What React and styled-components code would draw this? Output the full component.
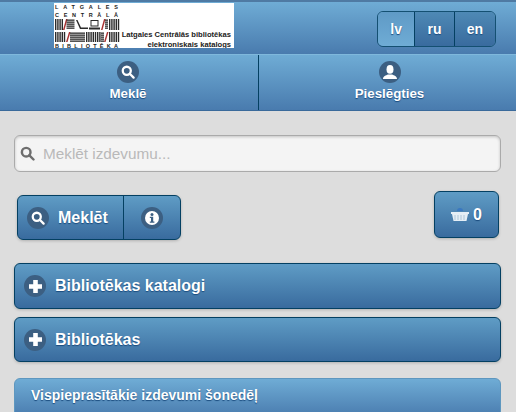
import React from 'react';
import styled, { createGlobalStyle, css } from 'styled-components';

const Global = createGlobalStyle`
  html, body { margin: 0; padding: 0; height: 100%; overflow: hidden; background: #dddddd; }
  body { font-family: "Liberation Sans", Arial, sans-serif; }
  * { box-sizing: border-box; }
`;

const blue = css`
  background: linear-gradient(#6facd5, #497bae);
`;
const btnBlue = css`
  background: linear-gradient(#5f9cc5, #396b9e);
  border: 1px solid #044062;
  color: #fff;
  font-weight: bold;
  text-shadow: 0 1px 1px #194b7e;
  box-shadow: 0 1px 3px rgba(0,0,0,.2);
`;

const Page = styled.div`width: 516px; height: 412px; overflow: hidden;`;

const Header = styled.header`
  ${blue}
  height: 54px;
  border-top: 2px solid #4f7aa3;
  display: flex;
  align-items: flex-start;
  justify-content: space-between;
  padding: 1px 20px 0 54px;
`;

const Logo = styled.div`
  width: 180px;
  height: 45px;
  background: #fff;
  display: flex;
  overflow: hidden;
`;
const LogoMark = styled.svg`width: 66px; height: 45px; flex: none; display: block;`;
const LogoCaption = styled.div`
  flex: 1;
  display: flex;
  flex-direction: column;
  justify-content: flex-end;
  align-items: flex-end;
  font-size: 7.6px;
  line-height: 9.500px;
  font-weight: bold;
  color: #222;
  white-space: nowrap;
  padding: 0 3px 0 0;
  margin-bottom: -1px;
`;

const LangGroup = styled.div`
  display: flex;
  height: 36px;
  width: 119px;
  margin-top: 8px;
  border-radius: 6px;
  overflow: hidden;
  border: 1px solid #145072;
`;
const LangBtn = styled.div`
  flex: ${p => p.$w} 0 0;
  display: flex;
  align-items: center;
  justify-content: center;
  font-size: 14px;
  font-weight: bold;
  color: #fff;
  text-shadow: 0 1px 1px #194b7e;
  background: ${p => p.$active ? 'linear-gradient(#5f9ac6, #6facd5)' : 'linear-gradient(#4e89b5, #396b9e)'};
  & + & { border-left: 1px solid #044062; }
`;

const Nav = styled.nav`
  ${blue}
  height: 57px;
  border-top: 1px solid #7fb8dc;
  border-bottom: 1px solid #3a6a9b;
  display: grid;
  grid-template-columns: 258px 258px;
`;
const NavItem = styled.div`
  min-width: 0;
  display: flex;
  flex-direction: column;
  align-items: center;
  padding: 6px ${p => p.$right || 0}px 0 ${p => p.$left || 0}px;
  color: #fff;
  font-size: 13.3px;
  font-weight: bold;
  text-shadow: 0 1px 1px #194b7e;
  & + & { border-left: 1px solid #044062; }
`;
const NavLabel = styled.span`margin-top: 2px; line-height: 18px;`;

const Disc = styled.span`
  width: ${p => p.$s || 22}px;
  height: ${p => p.$s || 22}px;
  border-radius: 50%;
  background: #3c5f82;
  display: inline-flex;
  align-items: center;
  justify-content: center;
  flex: none;
  & svg { display: block; }
`;

const Content = styled.main`
  padding: 24px 15px 0 14px;
  display: flex;
  flex-direction: column;
`;
const SearchBox = styled.div`
  height: 37px;
  display: flex;
  align-items: center;
  gap: 8px;
  padding-left: 5px;
  border: 1px solid #aaa;
  border-radius: 6px;
  background: #f4f4f4;
  box-shadow: inset 0 1px 3px rgba(0,0,0,.2);
`;
const Placeholder = styled.span`
  color: #b9b9b9;
  font-size: 15.300px;
`;
const Actions = styled.div`
  margin-top: 19px;
  height: 49px;
  display: flex;
  justify-content: space-between;
  align-items: flex-start;
  padding: 0 2px 0 3px;
`;
const SplitBtn = styled.div`
  ${btnBlue}
  margin-top: 4px;
  height: 45px;
  width: 164px;
  border-radius: 6px;
  display: flex;
  overflow: hidden;
`;
const SplitMain = styled.div`
  width: 105px;
  display: flex;
  align-items: center;
  gap: 9px;
  padding-left: 9px;
  font-size: 16px;
`;
const SplitAside = styled.div`
  flex: 1;
  border-left: 1px solid #044062;
  display: flex;
  align-items: center;
  justify-content: center;
`;
const CartBtn = styled.div`
  ${btnBlue}
  width: 65px;
  height: 47px;
  border-radius: 6px;
  display: flex;
  align-items: center;
  justify-content: center;
  gap: 4px;
  font-size: 16px;
`;
const Collapsible = styled.div`
  ${btnBlue}
  height: ${p => p.$h}px;
  margin-top: ${p => p.$mt}px;
  border-radius: 6px;
  display: flex;
  align-items: center;
  gap: 9px;
  padding-left: 9px;
  font-size: 16px;
`;
const ListHead = styled.div`
  ${blue}
  margin-top: 16px;
  height: 40px;
  border: 1px solid #5e97bf;
  border-radius: 6px 6px 0 0;
  padding: 7px 0 0 16px;
  color: #fff;
  font-size: 14px;
  font-weight: bold;
  line-height: 18px;
  text-shadow: 0 1px 1px #194b7e;
`;

const SearchIcon = ({ size = 14, color = '#fff', sw = 2.6 }) => (
  <svg width={size} height={size} viewBox="0 0 16 16" fill="none" stroke={color} strokeWidth={sw}>
    <circle cx="6.6" cy="6.6" r="4.6" />
    <path d="M10 10l4.4 4.4" strokeLinecap="round" />
  </svg>
);
const UserIcon = () => (
  <svg width="16" height="16" viewBox="0 0 16 16" fill="#fff">
    <ellipse cx="8" cy="5.4" rx="3.5" ry="4.4" />
    <path d="M1 15c0-3 3-3.6 5-4.6h4c2 1 5 1.600 5 4.600z" />
  </svg>
);
const InfoIcon = () => (
  <svg width="14" height="14" viewBox="0 0 14 14" fill="#fff">
    <circle cx="7" cy="7" r="7" />
    <circle cx="7" cy="3.400" r="1.500" fill="#3c5f82" />
    <path d="M4.800 5.800h3.400v4.600h1.200v1.300H4.800v-1.300H6V7.100H4.800z" fill="#3c5f82" />
  </svg>
);
const PlusIcon = () => (
  <svg width="15" height="15" viewBox="0 0 15 15" fill="none" stroke="#fff" strokeWidth="4.600">
    <path d="M7.500 1v13M1 7.500h13" />
  </svg>
);
const BasketIcon = () => (
  <svg width="18" height="14" viewBox="0 0 18 14">
    <path d="M6 3a3 3 0 0 1 6 0z" fill="#3a78c0" />
    <path d="M0 4h18v2h-1l-1.500 7h-13L1 6H0z" fill="#e4eef6" />
    <path d="M4 7v5M7 7v5M10 7v5M13 7v5" stroke="#9fbbd3" strokeWidth=".8" />
  </svg>
);

const Bars = ({ x, y, h, n, w = 1.300, gap = 2.200 }) => (
  <g fill="#2b2b2b">
    {Array.from({ length: n }, (_, i) => <rect key={i} x={x + i * gap} y={y} width={w} height={h} />)}
  </g>
);
const Shelf = ({ x, y, w, n, h = 1.300, gap = 2 }) => (
  <g fill="#2b2b2b">
    {Array.from({ length: n }, (_, i) => <rect key={i} x={x} y={y + i * gap} width={w} height={h} />)}
  </g>
);

const letterStyle = { fontFamily: '"Liberation Sans", sans-serif', fontSize: 5.500, fontWeight: 700, fill: '#222' };

const LogoArt = () => (
  <LogoMark viewBox="0 0 66 45">
    <text x="1" y="6" textLength="63" lengthAdjust="spacing" style={letterStyle}>LATGALES</text>
    <text x="1" y="14" textLength="63" lengthAdjust="spacing" style={letterStyle}>CENTRĀLĀ</text>
    <Bars x={1} y={16} h={11} n={4} w={1.400} />
    <path d="M9 27l3-11h1.500l-3 11z" fill="#a83232" />
    <Shelf x={12.500} y={16.500} w={8} n={5} />
    <path d="M22 17l4 9h8v-1.500h-7l-3.500-7.500z" fill="#2b2b2b" />
    <rect x="37" y="17.500" width="7" height="5.500" fill="#fff" stroke="#2b2b2b" />
    <rect x="35" y="24.500" width="11" height="2" fill="#2b2b2b" />
    <path d="M47 27l3-11h1.500l-3 11z" fill="#a83232" />
    <Shelf x={51} y={16.500} w={3} n={5} />
    <Bars x={55} y={16} h={11} n={5} w={1.400} />
    <Bars x={1} y={29} h={10} n={5} w={1.400} />
    <path d="M12 39l3-10h1.500l-3 10z" fill="#a83232" />
    <Shelf x={16} y={29.500} w={15} n={5} />
    <Bars x={32} y={29} h={10} n={7} w={1.400} />
    <Shelf x={47} y={29.500} w={3} n={5} />
    <path d="M50 39l3-10h1.500l-3 10z" fill="#a83232" />
    <Bars x={55} y={29} h={10} n={5} w={1.400} />
    <text x="1" y="45" textLength="63" lengthAdjust="spacing" style={letterStyle}>BIBLIOTĒKA</text>
  </LogoMark>
);

export default function App() {
  return (
    <Page>
      <Global />
      <Header>
        <Logo>
          <LogoArt />
          <LogoCaption>
            <span>Latgales Centrālās bibliotēkas</span>
            <span>elektroniskais katalogs</span>
          </LogoCaption>
        </Logo>
        <LangGroup>
          <LangBtn $w={37} $active>lv</LangBtn>
          <LangBtn $w={39}>ru</LangBtn>
          <LangBtn $w={41}>en</LangBtn>
        </LangGroup>
      </Header>
      <Nav>
        <NavItem $right={2}>
          <Disc><SearchIcon /></Disc>
          <NavLabel>Meklē</NavLabel>
        </NavItem>
        <NavItem $left={4}>
          <Disc><UserIcon /></Disc>
          <NavLabel>Pieslēgties</NavLabel>
        </NavItem>
      </Nav>
      <Content>
        <SearchBox>
          <SearchIcon size={15} color="#6e6e6e" />
          <Placeholder>Meklēt izdevumu...</Placeholder>
        </SearchBox>
        <Actions>
          <SplitBtn>
            <SplitMain>
              <Disc><SearchIcon /></Disc>
              Meklēt
            </SplitMain>
            <SplitAside>
              <Disc><InfoIcon /></Disc>
            </SplitAside>
          </SplitBtn>
          <CartBtn>
            <BasketIcon />
            0
          </CartBtn>
        </Actions>
        <Collapsible $h={46} $mt={23}>
          <Disc><PlusIcon /></Disc>
          Bibliotēkas katalogi
        </Collapsible>
        <Collapsible $h={45} $mt={8}>
          <Disc><PlusIcon /></Disc>
          Bibliotēkas
        </Collapsible>
        <ListHead>Vispieprasītākie izdevumi šonedēļ</ListHead>
      </Content>
    </Page>
  );
}
